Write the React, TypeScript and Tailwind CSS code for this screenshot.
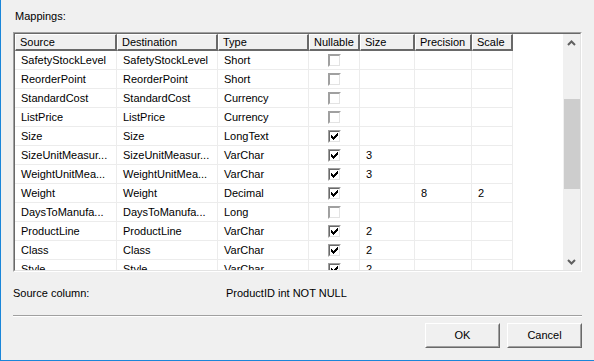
import React from "react";

type Row = [string, string, string, boolean, string?, string?, string?];

const rows: Row[] = [
  ["SafetyStockLevel", "SafetyStockLevel", "Short", false],
  ["ReorderPoint", "ReorderPoint", "Short", false],
  ["StandardCost", "StandardCost", "Currency", false],
  ["ListPrice", "ListPrice", "Currency", false],
  ["Size", "Size", "LongText", true],
  ["SizeUnitMeasur...", "SizeUnitMeasur...", "VarChar", true, "3"],
  ["WeightUnitMea...", "WeightUnitMea...", "VarChar", true, "3"],
  ["Weight", "Weight", "Decimal", true, "", "8", "2"],
  ["DaysToManufa...", "DaysToManufa...", "Long", false],
  ["ProductLine", "ProductLine", "VarChar", true, "2"],
  ["Class", "Class", "VarChar", true, "2"],
  ["Style", "Style", "VarChar", true, "2"],
];

const headers = ["Source", "Destination", "Type", "Nullable", "Size", "Precision", "Scale"];

const cols = "grid grid-cols-[102px_101px_91px_51px_55px_57px_41px_1fr]";

function CheckMark() {
  const px: [number, number][] = [
    [6, 0],
    [5, 1], [6, 1],
    [0, 2], [4, 2], [5, 2], [6, 2],
    [0, 3], [1, 3], [3, 3], [4, 3], [5, 3],
    [0, 4], [1, 4], [2, 4], [3, 4], [4, 4],
    [1, 5], [2, 5], [3, 5],
    [2, 6],
  ];
  return (
    <svg width="7" height="7" viewBox="0 0 7 7" shapeRendering="crispEdges">
      {px.map(([x, y], i) => (
        <rect key={i} x={x} y={y} width="1" height="1" fill="#000" />
      ))}
    </svg>
  );
}

function Checkbox({ checked }: { checked: boolean }) {
  return checked ? (
    <div className="w-[13px] h-[13px] border border-t-[#a0a0a0] border-l-[#a0a0a0] border-r-white border-b-white">
      <div className="w-full h-full border border-t-[#696969] border-l-[#696969] border-r-[#e3e3e3] border-b-[#e3e3e3] bg-white flex items-center justify-center">
        <CheckMark />
      </div>
    </div>
  ) : (
    <div className="w-[13px] h-[13px] border border-t-[#a0a0a0] border-l-[#a0a0a0] border-r-white border-b-white">
      <div className="w-full h-full border border-t-[#a0a0a0] border-l-[#a0a0a0] border-r-[#e3e3e3] border-b-[#e3e3e3] bg-white" />
    </div>
  );
}

function Chevron({ up }: { up: boolean }) {
  return (
    <svg width="9" height="6" viewBox="0 0 9 6">
      <polyline
        points={up ? "1,5 4.5,1.5 8,5" : "1,1 4.5,4.5 8,1"}
        fill="none"
        stroke="#606060"
        strokeWidth="2"
      />
    </svg>
  );
}

function Header({ label }: { label: string }) {
  return (
    <div className="h-[17px] bg-[#f0f0f0] border-t border-l border-t-white border-l-white border-r-2 border-b-2 border-r-[#696969] border-b-[#696969] pl-[4px] leading-[14px] whitespace-nowrap overflow-hidden">
      {label}
    </div>
  );
}

function Cell({ children, center }: { children?: React.ReactNode; center?: boolean }) {
  return (
    <div
      className={
        "h-[19px] border-r border-b border-[#ececec] leading-[18px] whitespace-nowrap overflow-hidden " +
        (center ? "flex items-center justify-center" : "pl-[6px]")
      }
    >
      {children}
    </div>
  );
}

export default function App() {
  return (
    <div
      className="w-[594px] h-[361px] bg-[#f0f0f0] border-l border-b border-[#1a86d9] flex flex-col text-[11px] text-black"
      style={{ fontFamily: '"Liberation Sans", Arial, sans-serif' }}
    >
      <div className="pl-[14px] pt-[10px] leading-[13px]">Mappings:</div>

      <div className="ml-[12px] mt-[9px] w-[569px] h-[240px] border border-t-[#a0a0a0] border-l-[#a0a0a0] border-r-white border-b-white">
        <div className="w-full h-full border border-t-[#696969] border-l-[#696969] border-r-[#e3e3e3] border-b-[#e3e3e3] bg-white flex">
          <div className="flex-1 overflow-hidden flex flex-col">
            <div className={cols}>
              {headers.map((h) => (
                <Header key={h} label={h} />
              ))}
              <div className="h-[17px] bg-white" />
            </div>
            {rows.map((r, i) => (
              <div key={i} className={cols}>
                <Cell>{r[0]}</Cell>
                <Cell>{r[1]}</Cell>
                <Cell>{r[2]}</Cell>
                <Cell center>
                  <Checkbox checked={r[3]} />
                </Cell>
                <Cell>{r[4]}</Cell>
                <Cell>{r[5]}</Cell>
                <Cell>{r[6]}</Cell>
                <div className="h-[19px]" />
              </div>
            ))}
          </div>
          <div className="w-[17px] bg-[#f0f0f0] flex flex-col">
            <div className="h-[17px] flex items-center justify-center">
              <Chevron up />
            </div>
            <div className="flex-1 pt-[48px] pl-[1px]">
              <div className="h-[90px] bg-[#cdcdcd]" />
            </div>
            <div className="h-[17px] flex items-center justify-center">
              <Chevron up={false} />
            </div>
          </div>
        </div>
      </div>

      <div className="mt-[15px] flex leading-[13px]">
        <div className="pl-[12px] w-[225px]">Source column:</div>
        <div>ProductID int NOT NULL</div>
      </div>

      <div className="ml-[12px] mt-[15px] w-[569px] h-[2px] border-t border-t-[#a0a0a0] border-b border-b-white" />

      <div className="mt-[6px] flex justify-end gap-[7px] pr-[12px]">
        {["OK", "Cancel"].map((b) => (
          <div
            key={b}
            className="w-[75px] h-[25px] border border-t-white border-l-white border-r-[#696969] border-b-[#696969]"
          >
            <div className="w-full h-full bg-[#f0f0f0] border border-t-[#f0f0f0] border-l-[#f0f0f0] border-r-[#a0a0a0] border-b-[#a0a0a0] flex items-center justify-center">
              {b}
            </div>
          </div>
        ))}
      </div>
    </div>
  );
}
